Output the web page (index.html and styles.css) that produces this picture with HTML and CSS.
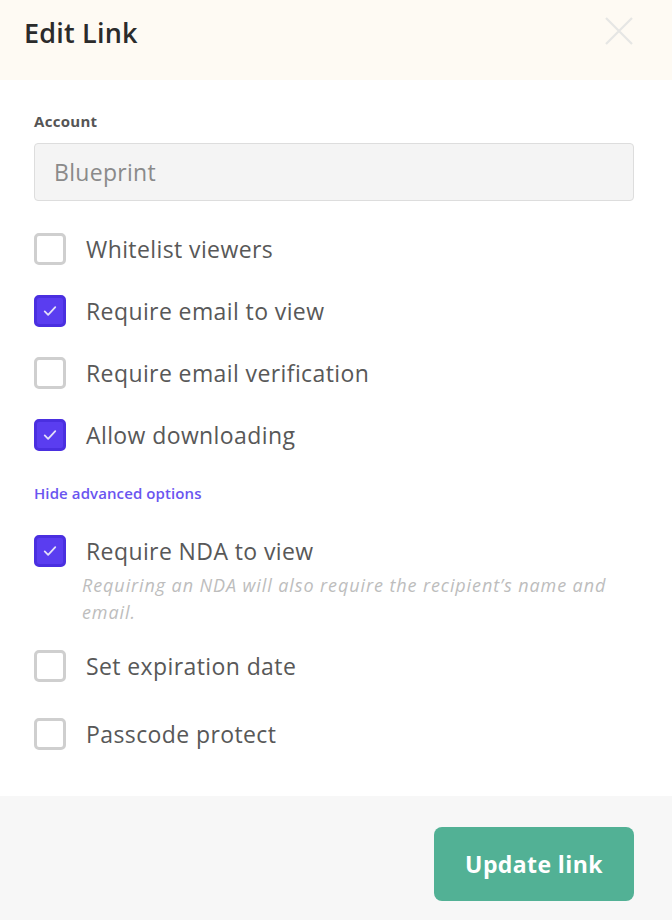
FILE: index.html
```html
<!DOCTYPE html>
<html>
<head>
<meta charset="utf-8">
<link rel="stylesheet" href="styles.css">
</head>
<body>
<div class="modal">
  <header class="head">
    <h1 class="title">Edit Link</h1>
    <svg class="close" width="30" height="30" viewBox="0 0 30 30"><path d="M2 2L28 28M28 2L2 28" stroke="#e6e6e4" stroke-width="2.2" fill="none"/></svg>
  </header>
  <main class="body">
    <div class="label">Account</div>
    <div class="input">Blueprint</div>
    <div class="opts main-opts">
      <div class="row"><span class="cb"></span><span class="txt">Whitelist viewers</span></div>
      <div class="row"><span class="cb on"><svg viewBox="0 0 32 32" width="30" height="30"><path d="M9.5 16.5l4.2 4.2 8.8-9.4" stroke="#e4e0f8" stroke-width="2.2" fill="none" stroke-linecap="round" stroke-linejoin="round"/></svg></span><span class="txt">Require email to view</span></div>
      <div class="row"><span class="cb"></span><span class="txt">Require email verification</span></div>
      <div class="row"><span class="cb on"><svg viewBox="0 0 32 32" width="30" height="30"><path d="M9.5 16.5l4.2 4.2 8.8-9.4" stroke="#e4e0f8" stroke-width="2.2" fill="none" stroke-linecap="round" stroke-linejoin="round"/></svg></span><span class="txt">Allow downloading</span></div>
    </div>
    <a class="adv">Hide advanced options</a>
    <div class="opts adv-opts">
      <div class="row nda"><span class="cb on"><svg viewBox="0 0 32 32" width="30" height="30"><path d="M9.5 16.5l4.2 4.2 8.8-9.4" stroke="#e4e0f8" stroke-width="2.2" fill="none" stroke-linecap="round" stroke-linejoin="round"/></svg></span><span class="txt">Require NDA to view</span></div>
      <p class="hint">Requiring an NDA will also require the recipient’s name and email.</p>
      <div class="row exp"><span class="cb"></span><span class="txt">Set expiration date</span></div>
      <div class="row pass"><span class="cb"></span><span class="txt">Passcode protect</span></div>
    </div>
  </main>
  <footer class="foot">
    <button class="btn">Update link</button>
  </footer>
</div>
</body>
</html>
```
FILE: styles.css
```css
* { box-sizing: border-box; }
html, body { margin: 0; padding: 0; background: #fff; }
body { font-family: "Open Sans", "Liberation Sans", sans-serif; width: 672px; height: 920px; overflow: hidden; }
.modal { display: flex; flex-direction: column; height: 920px; }
.head { height: 80px; background: #fefaf3; display: flex; align-items: center; justify-content: space-between; padding: 0 38px 0 24px; }
.title { margin: 0; font-size: 27px; font-weight: 600; color: #2b2b2b; letter-spacing: 0.2px; position: relative; top: -8px; }
.close { position: relative; top: -9px; }
.body { flex: 1; padding: 32px 38px 0 34px; }
.label { font-size: 15px; font-weight: 700; color: #555; line-height: 18px; letter-spacing: 0.3px; }
.input { margin-top: 13px; height: 58px; background: #f4f4f4; border: 1px solid #ddd; border-radius: 4px; padding-left: 19px; display: flex; align-items: center; font-size: 23px; letter-spacing: 0.3px; color: #8a8a8a; }
.opts { display: flex; flex-direction: column; }
.main-opts { margin-top: 17px; }
.row { display: flex; align-items: center; height: 62px; }
.cb { width: 32px; height: 32px; border: 3px solid #cfcfcf; border-radius: 5px; background: #fff; flex: none; display: flex; align-items: center; justify-content: center; }
.cb.on { background: #5a3df0; border-color: #4a2fe0; }
.txt { margin-left: 20px; font-size: 23px; letter-spacing: 0.4px; color: #585858; line-height: 30px; }
.adv { display: block; font-size: 15px; font-weight: 600; color: #6a55f0; margin-top: 17px; line-height: 20px; letter-spacing: 0.1px; }
.adv-opts { margin-top: 21px; }
.row.nda { height: 54px; }
.hint { margin: -6px 0 0 48px; font-size: 18px; font-style: italic; color: #bdbdbd; line-height: 27px; width: 540px; letter-spacing: 0.9px; }
.row.exp { height: 64px; margin-top: 8px; }
.row.pass { height: 72px; }
.foot { height: 124px; background: #f7f7f7; display: flex; justify-content: flex-end; align-items: flex-start; padding: 31px 38px 0 0; }
.btn { width: 200px; height: 74px; background: #52b195; border: none; border-radius: 8px; color: #fff; font-family: "Open Sans", "Liberation Sans", sans-serif; font-size: 23px; letter-spacing: 0.4px; font-weight: 700; }
```
